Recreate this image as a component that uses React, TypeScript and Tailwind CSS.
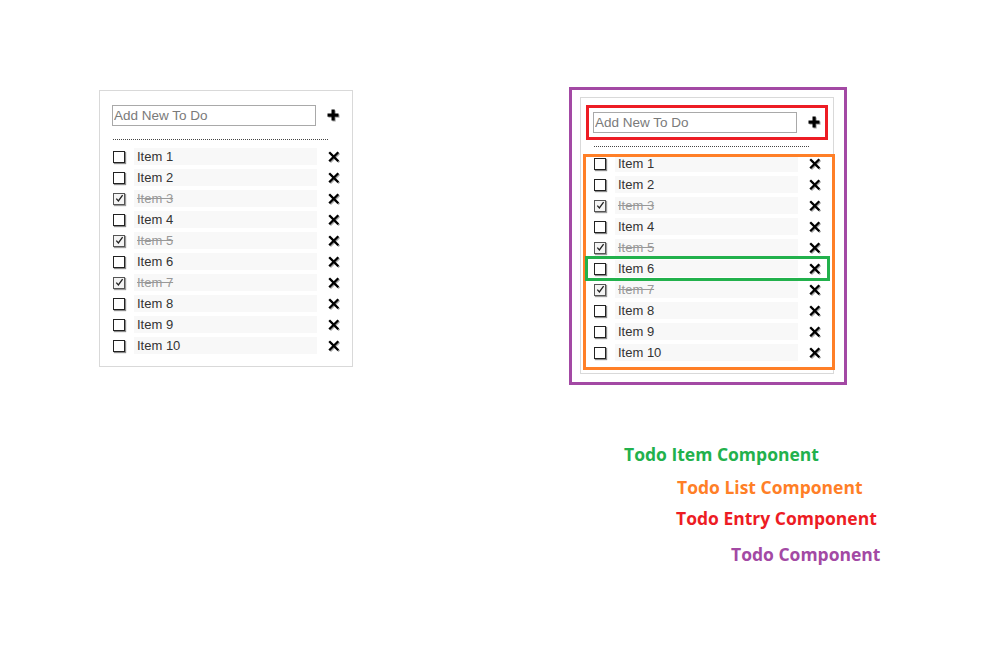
import React from "react";

const items = [
  { t: "Item 1", done: false },
  { t: "Item 2", done: false },
  { t: "Item 3", done: true },
  { t: "Item 4", done: false },
  { t: "Item 5", done: true },
  { t: "Item 6", done: false },
  { t: "Item 7", done: true },
  { t: "Item 8", done: false },
  { t: "Item 9", done: false },
  { t: "Item 10", done: false },
];

function PlusIcon() {
  return (
    <svg width="13" height="13" viewBox="0 0 13 13" className="drop-shadow-[1px_1px_0.6px_rgba(0,0,0,0.35)]">
      <rect x="4.5" y="0.5" width="3.2" height="11" fill="#000" />
      <rect x="0.5" y="4.5" width="11" height="3.2" fill="#000" />
    </svg>
  );
}

function XIcon() {
  return (
    <svg width="12" height="12" viewBox="0 0 12 12" className="drop-shadow-[1px_1px_0.6px_rgba(0,0,0,0.35)]">
      <path d="M1.2 1.2 L10.3 10.3 M10.3 1.2 L1.2 10.3" stroke="#000" strokeWidth="2.3" strokeLinecap="butt" />
    </svg>
  );
}

function CheckBox({ checked }: { checked: boolean }) {
  if (checked) {
    return (
      <span className="ml-[1px] flex h-[12px] w-[12px] shrink-0 items-center justify-center border border-[#555] bg-[#f4f4f4] shadow-[1px_1px_1px_#9a9a9a]">
        <svg width="9" height="9" viewBox="0 0 9 9">
          <path d="M1.3 4.6 L3.4 7 L7.6 1.2" stroke="#222" strokeWidth="1.3" fill="none" />
        </svg>
      </span>
    );
  }
  return (
    <span className="ml-[1px] block h-[12px] w-[12px] shrink-0 border border-[#222] bg-white shadow-[1px_1px_1px_#8a8a8a]" />
  );
}

function TodoItem({ t, done }: { t: string; done: boolean }) {
  return (
    <div className="flex h-[17px] items-center">
      <CheckBox checked={done} />
      <div
        className={
          done
            ? "ml-[9px] flex h-[17px] w-[183px] items-center bg-[#f8f8f8] pl-[3px] text-[13px] text-[#999] line-through"
            : "ml-[9px] flex h-[17px] w-[183px] items-center bg-[#f8f8f8] pl-[3px] text-[13px] text-[#333]"
        }
      >
        {t}
      </div>
      <div className="ml-[11px] flex w-[12px] items-center">
        <XIcon />
      </div>
    </div>
  );
}

function TodoPanel() {
  return (
    <div className="h-[277px] w-[254px] border border-[#d9d9d9] bg-white px-[12px] pt-[14px] font-['Liberation_Sans',Arial,sans-serif]">
      <div className="flex h-[21px] items-center">
        <input
          readOnly
          placeholder="Add New To Do"
          className="h-[21px] w-[205px] border border-[#a9a9a9] px-[1px] text-[13.5px] text-[#333] outline-none placeholder:text-[#7a7a7a]"
        />
        <div className="ml-[11px] flex items-center">
          <PlusIcon />
        </div>
      </div>
      <div className="ml-[1px] mt-[13px] w-[215px] border-t border-dotted border-[#444]" />
      <div className="mt-[8px] flex flex-col gap-[4px]">
        {items.map((it) => (
          <TodoItem key={it.t} t={it.t} done={it.done} />
        ))}
      </div>
    </div>
  );
}

export default function App() {
  return (
    <div className="relative h-[652px] w-[982px] overflow-hidden bg-white">
      <div className="flex items-start pl-[99px] pt-[90px]">
        <TodoPanel />
        <div className="relative ml-[227px] mt-[7px]">
          <TodoPanel />
          <div className="pointer-events-none absolute left-[-11px] top-[-10px] h-[298px] w-[278px] border-[3px] border-[#a349a4]" />
          <div className="pointer-events-none absolute left-[6px] top-[8px] h-[35px] w-[242px] border-[3px] border-[#ed1c24]" />
          <div className="pointer-events-none absolute left-[3px] top-[57px] h-[216px] w-[252px] border-[3px] border-[#ff7f27]" />
          <div className="pointer-events-none absolute left-[5px] top-[159px] h-[25px] w-[245px] border-[3px] border-[#22b14c]" />
        </div>
      </div>
      <div className="font-['Open_Sans',sans-serif] text-[17.5px] font-bold leading-none">
        <div className="absolute left-[624px] top-[446px] text-[#22b14c]">Todo Item Component</div>
        <div className="absolute left-[677px] top-[479px] text-[#ff7f27]">Todo List Component</div>
        <div className="absolute left-[676px] top-[510px] text-[#ed1c24]">Todo Entry Component</div>
        <div className="absolute left-[731px] top-[546px] text-[#a349a4]">Todo Component</div>
      </div>
    </div>
  );
}
